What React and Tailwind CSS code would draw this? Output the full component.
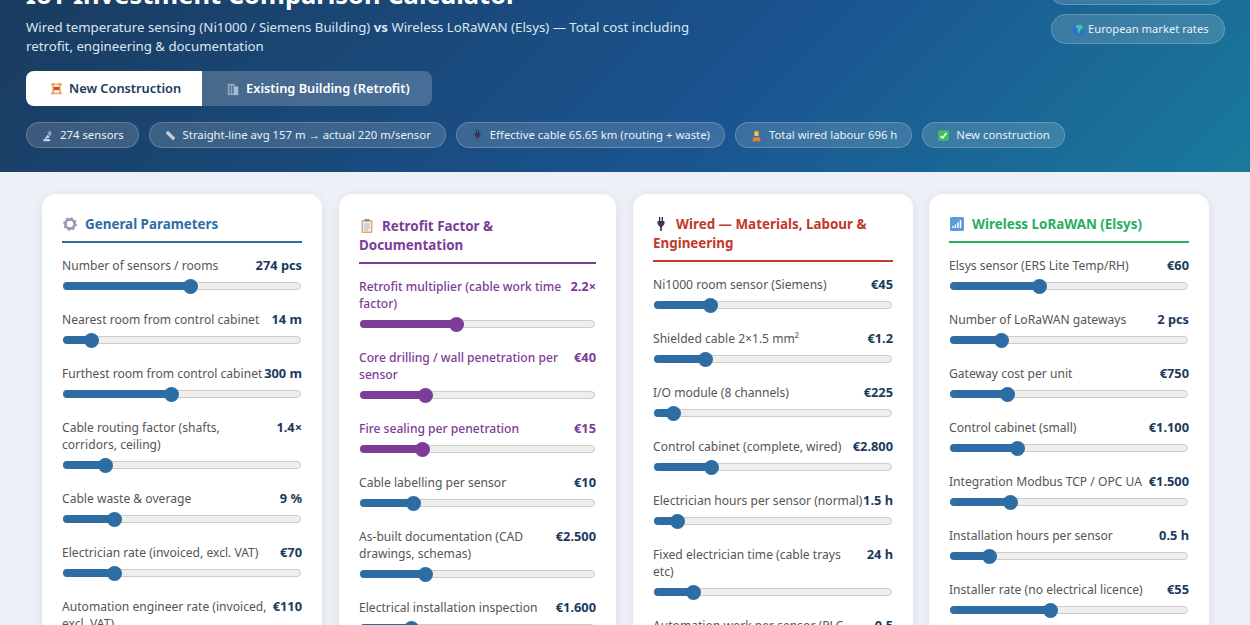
const font = { fontFamily: '"Noto Sans", sans-serif' };

function Emoji({ name, className = "w-[13px] h-[13px]" }) {
  const shapes = {
    crane: (
      <>
        <rect x="3" y="1" width="2" height="14" fill="#e8913a" />
        <rect x="11" y="1" width="2" height="14" fill="#e8913a" />
        <rect x="1" y="2" width="14" height="2" fill="#e8b04a" />
        <rect x="1" y="13" width="14" height="2" fill="#f2a08a" />
        <rect x="5" y="6" width="6" height="4" fill="#c9403f" />
      </>
    ),
    office: (
      <>
        <rect x="2" y="2" width="8" height="13" fill="#8fa9c4" />
        <rect x="9" y="5" width="5" height="10" fill="#a8bccf" />
        <rect x="4" y="4" width="1.5" height="9" fill="#4d6e91" />
        <rect x="7" y="4" width="1.5" height="9" fill="#4d6e91" />
      </>
    ),
    antenna: (
      <>
        <path d="M4 13 L8 7 L11 10 Z" fill="#c9d2de" />
        <path d="M8 4 L12 2 L13 7 L10 9 Z" fill="#8fa3c8" />
        <rect x="3" y="12.5" width="8" height="2.5" fill="#d5dbe6" />
      </>
    ),
    ruler: <path d="M2 5 L5 2 L14 11 L11 14 Z" fill="#c3ccd8" />,
    plug: (
      <>
        <rect x="6" y="1" width="1.3" height="4" fill="#2b2f45" />
        <rect x="8.7" y="1" width="1.3" height="4" fill="#2b2f45" />
        <path d="M4.5 5 H11.5 V8 L9 11 H7 L4.5 8 Z" fill="#3a3a56" />
        <rect x="7" y="11" width="2" height="4" fill="#5b4a7a" />
      </>
    ),
    worker: (
      <>
        <path d="M5 5 A3 3 0 0 1 11 5 Z" fill="#f2b632" />
        <rect x="5.5" y="5" width="5" height="3.5" fill="#f5c77e" />
        <path d="M3 15 L4 10 L12 10 L13 15 Z" fill="#e8832e" />
      </>
    ),
    check: (
      <>
        <rect x="1.5" y="1.5" width="13" height="13" rx="1.5" fill="#3fbf5f" />
        <path d="M4.5 8.5 L7 11 L11.5 5" stroke="#fff" strokeWidth="1.8" fill="none" />
      </>
    ),
    globe: (
      <>
        <circle cx="8" cy="8" r="7" fill="#2f6fd1" />
        <path d="M6 2 L12 2 L14 6 L10 9 L9 13 L7 11 L7 7 L4 5 Z" fill="#3ec49a" />
      </>
    ),
    gear: (
      <>
        <circle cx="8" cy="8" r="4.6" fill="none" stroke="#a292bd" strokeWidth="2.8" />
        <circle cx="8" cy="8" r="6.1" fill="none" stroke="#a292bd" strokeWidth="1.6" strokeDasharray="2 2.8" />
      </>
    ),
    clipboard: (
      <>
        <rect x="2.5" y="2" width="11" height="13" rx="1" fill="#e8a76c" />
        <rect x="4" y="3.5" width="8" height="10" fill="#f3f3f3" />
        <rect x="5.5" y="1" width="5" height="2.5" fill="#8a8f99" />
        <path d="M5 6h6M5 8h6M5 10h6M5 12h4" stroke="#9aa3ad" strokeWidth="0.8" />
      </>
    ),
    signal: (
      <>
        <rect x="1" y="1" width="14" height="14" rx="1.5" fill="#5a9bdc" />
        <path d="M4 12v-2M6.5 12V8.5M9 12V6.5M11.5 12V4" stroke="#fff" strokeWidth="1.5" />
      </>
    ),
  };
  return (
    <svg viewBox="0 0 16 16" className={`inline-block shrink-0 ${className}`}>
      {shapes[name]}
    </svg>
  );
}

function Chip({ icon, text }) {
  return (
    <span className="flex items-center gap-[6px] h-[26px] rounded-full border border-white/20 bg-white/15 px-[14px] text-[11.34px] text-[#eaf1f8]">
      <Emoji name={icon} />
      {text}
    </span>
  );
}

function Param({ label, value, pct, purple = false }) {
  return (
    <div className="mb-[21px]">
      <div className="flex items-start justify-between text-[12.1px] leading-[17px] mb-[8px]">
        <span className={`whitespace-pre-line ${purple ? "text-[#7d3c98] font-medium" : "text-[#555]"}`}>{label}</span>
        <span className={`text-[12.8px] font-bold whitespace-nowrap ${purple ? "text-[#7d3c98]" : "text-[#1a3a5c]"}`}>{value}</span>
      </div>
      <div className="relative h-[8px] rounded-full bg-[#eee] border border-[#ccc] mx-px">
        <div
          className={`absolute -left-px -top-px h-[8px] rounded-full ${purple ? "bg-[#7d3c98]" : "bg-[#2e6da4]"}`}
          style={{ width: `${pct}%` }}
        />
        <div
          className={`absolute -top-[4px] w-[15px] h-[15px] -ml-[7.5px] rounded-full ${purple ? "bg-[#7d3c98]" : "bg-[#2e6da4]"}`}
          style={{ left: `${pct}%` }}
        />
      </div>
    </div>
  );
}

function Card({ icon, title, titleColor, lineColor, className, children }) {
  return (
    <section className={`${className} shrink-0 self-start rounded-[14px] bg-white px-5 pt-5 pb-4 shadow-[0_2px_12px_rgba(0,0,0,0.08)]`}>
      <h2 className={`text-[13.4px] leading-[19px] font-bold pt-px pb-[7px] mb-[14px] border-b-2 ${titleColor} ${lineColor}`}>
        <Emoji name={icon} className="w-[16px] h-[16px] mr-[7px] align-[-3px]" />
        {title}
      </h2>
      {children}
    </section>
  );
}

const general = [
  ["Number of sensors / rooms", "274 pcs", 53.4],
  ["Nearest room from control cabinet", "14 m", 11.8],
  ["Furthest room from control cabinet", "300 m", 45.4],
  ["Cable routing factor (shafts, corridors, ceiling)", "1.4×", 17.5],
  ["Cable waste & overage", "9 %", 21.5],
  ["Electrician rate (invoiced, excl. VAT)", "€70", 21.5],
  ["Automation engineer rate (invoiced, excl. VAT)", "€110", 40],
];

const retrofit = [
  ["Retrofit multiplier (cable work time factor)", "2.2×", 41, true],
  ["Core drilling / wall penetration per sensor", "€40", 27.8, true],
  ["Fire sealing per penetration", "€15", 26.5, true],
  ["Cable labelling per sensor", "€10", 22.5],
  ["As-built documentation (CAD drawings, schemas)", "€2.500", 27.8],
  ["Electrical installation inspection", "€1.600", 21.7],
];

const wired = [
  ["Ni1000 room sensor (Siemens)", "€45", 23.5],
  ["Shielded cable 2×1.5 mm²", "€1.2", 21.5],
  ["I/O module (8 channels)", "€225", 8],
  ["Control cabinet (complete, wired)", "€2.800", 24],
  ["Electrician hours per sensor (normal)", "1.5 h", 9.5],
  ["Fixed electrician time (cable trays\netc)", "24 h", 16.5],
  ["Automation work per sensor (PLC", "0.5", 20],
];

const wireless = [
  ["Elsys sensor (ERS Lite Temp/RH)", "€60", 37.5],
  ["Number of LoRaWAN gateways", "2 pcs", 21.5],
  ["Gateway cost per unit", "€750", 23.8],
  ["Control cabinet (small)", "€1.100", 28],
  ["Integration Modbus TCP / OPC UA", "€1.500", 25.2],
  ["Installation hours per sensor", "0.5 h", 16.5],
  ["Installer rate (no electrical licence)", "€55", 42],
];

export default function App() {
  return (
    <div className="h-[625px] overflow-hidden bg-[#edf1f7]" style={font}>
      <header className="-mt-[41px] h-[213px] bg-[linear-gradient(135deg,#1a3a5c_0%,#1a5490_60%,#1a7a9c_100%)] px-[26px] pt-[18px] text-white">
        <div className="flex justify-between">
          <div className="w-[700px]">
            <h1 className="text-[25.5px] leading-[34px] font-bold">IoT Investment Comparison Calculator</h1>
            <p className="mt-[7px] text-[13.24px] leading-[19px] text-[#dce6f0]">
              Wired temperature sensing (Ni1000 / Siemens Building) <b>vs</b> Wireless LoRaWAN (Elsys) — Total cost including retrofit, engineering &amp; documentation
            </p>
          </div>
          <div className="-mr-px -mt-[2px] flex flex-col items-end gap-[9px]">
            <div className="w-[176px] h-[30px] rounded-full border border-white/20 bg-white/15" />
            <span className="flex items-center gap-[3px] h-[30px] w-[174px] rounded-full border border-white/20 bg-white/15 pl-[20px] text-[11.2px] text-[#eaf1f8]">
              <Emoji name="globe" />
              European market rates
            </span>
          </div>
        </div>
        <div className="mt-[15px] flex w-fit rounded-[8px] overflow-hidden text-[12.8px] font-semibold leading-[35px]">
          <button className="flex items-center gap-[6px] bg-white pl-[24px] pr-[21px] text-[#1a3a5c]">
            <Emoji name="crane" />New Construction
          </button>
          <button className="flex items-center gap-[6px] bg-white/20 pl-[24px] pr-[22px] text-white">
            <Emoji name="office" className="w-[14px] h-[14px]" />Existing Building (Retrofit)
          </button>
        </div>
        <div className="mt-[16px] flex gap-[10px]">
          <Chip icon="antenna" text="274 sensors" />
          <Chip icon="ruler" text="Straight-line avg 157 m → actual 220 m/sensor" />
          <Chip icon="plug" text="Effective cable 65.65 km (routing + waste)" />
          <Chip icon="worker" text="Total wired labour 696 h" />
          <Chip icon="check" text="New construction" />
        </div>
      </header>
      <main className="flex gap-[17px] pl-[42px] pt-[22px]">
        <Card icon="gear" title="General Parameters" titleColor="text-[#2e6da4]" lineColor="border-[#2e6da4]" className="w-[280px]">
          {general.map((p) => <Param key={p[0]} label={p[0]} value={p[1]} pct={p[2]} />)}
        </Card>
        <Card icon="clipboard" title="Retrofit Factor & Documentation" titleColor="text-[#7d3c98] mt-[2px]" lineColor="border-[#7d3c98]" className="w-[277px]">
          {retrofit.map((p) => <Param key={p[0]} label={p[0]} value={p[1]} pct={p[2]} purple={p[3]} />)}
        </Card>
        <Card icon="plug" title="Wired — Materials, Labour & Engineering" titleColor="text-[#c0392b]" lineColor="border-[#c0392b]" className="w-[280px]">
          {wired.map((p) => <Param key={p[0]} label={p[0]} value={p[1]} pct={p[2]} />)}
        </Card>
        <Card icon="signal" title="Wireless LoRaWAN (Elsys)" titleColor="text-[#27ae60]" lineColor="border-[#27ae60]" className="w-[280px] -ml-px">
          {wireless.map((p) => <Param key={p[0]} label={p[0]} value={p[1]} pct={p[2]} />)}
        </Card>
      </main>
    </div>
  );
}
